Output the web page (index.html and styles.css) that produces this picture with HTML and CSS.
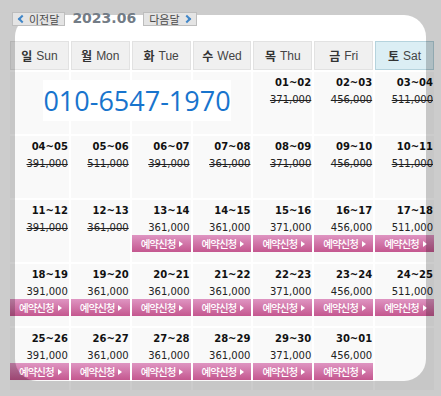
FILE: index.html
```html
<!DOCTYPE html>
<html lang="ko">
<head>
<meta charset="utf-8">
<title>2023.06</title>
<link rel="stylesheet" href="styles.css">
</head>
<body>
<div class="page">
  <div class="nav">
    <span class="navbtn"><span class="chev chev-l"></span>이전달</span>
    <span class="month">2023.06</span>
    <span class="navbtn">다음달<span class="chev chev-r"></span></span>
  </div>

  <div class="cal">
    <div class="hd"><b>일</b> Sun</div>
    <div class="hd"><b>월</b> Mon</div>
    <div class="hd"><b>화</b> Tue</div>
    <div class="hd"><b>수</b> Wed</div>
    <div class="hd"><b>목</b> Thu</div>
    <div class="hd"><b>금</b> Fri</div>
    <div class="hd sat"><b>토</b> Sat</div>

    <div class="cell e1"></div>
    <div class="cell e2"></div>
    <div class="cell e3"></div>
    <div class="cell e4"></div>
    <div class="phone">010-6547-1970</div>
    <div class="cell"><div class="dt">01~02</div><div class="pr off">371,000</div></div>
    <div class="cell"><div class="dt">02~03</div><div class="pr off">456,000</div></div>
    <div class="cell"><div class="dt">03~04</div><div class="pr off">511,000</div></div>

    <div class="cell"><div class="dt">04~05</div><div class="pr off">391,000</div></div>
    <div class="cell"><div class="dt">05~06</div><div class="pr off">511,000</div></div>
    <div class="cell"><div class="dt">06~07</div><div class="pr off">391,000</div></div>
    <div class="cell"><div class="dt">07~08</div><div class="pr off">361,000</div></div>
    <div class="cell"><div class="dt">08~09</div><div class="pr off">371,000</div></div>
    <div class="cell"><div class="dt">09~10</div><div class="pr off">456,000</div></div>
    <div class="cell"><div class="dt">10~11</div><div class="pr off">511,000</div></div>

    <div class="cell"><div class="dt">11~12</div><div class="pr off">391,000</div></div>
    <div class="cell"><div class="dt">12~13</div><div class="pr off">361,000</div></div>
    <div class="cell"><div class="dt">13~14</div><div class="pr">361,000</div><a class="btn">예약신청</a></div>
    <div class="cell"><div class="dt">14~15</div><div class="pr">361,000</div><a class="btn">예약신청</a></div>
    <div class="cell"><div class="dt">15~16</div><div class="pr">371,000</div><a class="btn">예약신청</a></div>
    <div class="cell"><div class="dt">16~17</div><div class="pr">456,000</div><a class="btn">예약신청</a></div>
    <div class="cell"><div class="dt">17~18</div><div class="pr">511,000</div><a class="btn">예약신청</a></div>

    <div class="cell"><div class="dt">18~19</div><div class="pr">391,000</div><a class="btn">예약신청</a></div>
    <div class="cell"><div class="dt">19~20</div><div class="pr">361,000</div><a class="btn">예약신청</a></div>
    <div class="cell"><div class="dt">20~21</div><div class="pr">361,000</div><a class="btn">예약신청</a></div>
    <div class="cell"><div class="dt">21~22</div><div class="pr">361,000</div><a class="btn">예약신청</a></div>
    <div class="cell"><div class="dt">22~23</div><div class="pr">371,000</div><a class="btn">예약신청</a></div>
    <div class="cell"><div class="dt">23~24</div><div class="pr">456,000</div><a class="btn">예약신청</a></div>
    <div class="cell"><div class="dt">24~25</div><div class="pr">511,000</div><a class="btn">예약신청</a></div>

    <div class="cell"><div class="dt">25~26</div><div class="pr">391,000</div><a class="btn">예약신청</a></div>
    <div class="cell"><div class="dt">26~27</div><div class="pr">361,000</div><a class="btn">예약신청</a></div>
    <div class="cell"><div class="dt">27~28</div><div class="pr">361,000</div><a class="btn">예약신청</a></div>
    <div class="cell"><div class="dt">28~29</div><div class="pr">361,000</div><a class="btn">예약신청</a></div>
    <div class="cell"><div class="dt">29~30</div><div class="pr">371,000</div><a class="btn">예약신청</a></div>
    <div class="cell"><div class="dt">30~01</div><div class="pr">456,000</div><a class="btn">예약신청</a></div>
    <div class="cell"></div>
  </div>

  <div class="frame"></div>
</div>
</body>
</html>
```

FILE: styles.css
```css
html, body {
  margin: 0;
  padding: 0;
  background: #ffffff;
}

.page {
  position: relative;
  width: 441px;
  height: 396px;
  overflow: hidden;
  font-family: "DejaVu Sans", "Noto Sans CJK KR", sans-serif;
}

/* ---------- month navigation ---------- */
.nav {
  position: relative;
  z-index: 2;
  display: flex;
  align-items: center;
  gap: 7px;
  padding: 10px 0 0 12px;
  height: 17px;
}

.navbtn {
  display: flex;
  align-items: center;
  gap: 4px;
  height: 12px;
  padding: 0 5px;
  border: 1px solid #bdbdbd;
  background: #e4e4e4;
  color: #4a4a4a;
  font: 11px/12px "Noto Sans CJK KR", sans-serif;
}

.chev {
  width: 4px;
  height: 4px;
  border-left: 2px solid #3f86c8;
  border-bottom: 2px solid #3f86c8;
}
.chev-l { transform: rotate(45deg); margin-left: 1px; }
.chev-r { transform: rotate(-135deg); margin-right: 1px; }

.month {
  font: bold 14px/17px "DejaVu Sans", sans-serif;
  color: #737c86;
}

/* ---------- calendar grid ---------- */
.cal {
  display: grid;
  grid-template-columns: repeat(7, 1fr);
  grid-template-rows: 29px repeat(5, 62px);
  gap: 2px;
  width: 424px;
  margin: 14px 0 0 10px;
}

.hd {
  display: flex;
  align-items: center;
  justify-content: center;
  gap: 4px;
  background: #f0f0f0;
  border: 1px solid #e2e2e2;
  color: #444;
  font: 12px "Liberation Sans", sans-serif;
}
.hd b {
  font: 700 12px "Noto Sans CJK KR", sans-serif;
  color: #333;
}
.hd.sat {
  background: #dbeef4;
  border-color: #b5d3dd;
}

.cell {
  background: #f9f9f9;
  text-align: right;
  padding-top: 5px;
}

/* empty days before the 1st, placed explicitly so the phone box can overlap them */
.e1 { grid-row: 2; grid-column: 1; }
.e2 { grid-row: 2; grid-column: 2; }
.e3 { grid-row: 2; grid-column: 3; }
.e4 { grid-row: 2; grid-column: 4; }

.dt {
  font: bold 10px/12px "DejaVu Sans", sans-serif;
  color: #111;
  padding-right: 1px;
}

.pr {
  margin-top: 3px;
  font: 10px/15px "DejaVu Sans", sans-serif;
  color: #222;
  padding-right: 1px;
}
.pr.off {
  text-decoration: line-through;
}

.btn {
  display: flex;
  align-items: center;
  gap: 3px;
  height: 17px;
  padding-left: 9px;
  background: linear-gradient(#df95c2, #c4578f);
  color: #fff;
  font: 500 10.5px/17px "Noto Sans CJK KR", sans-serif;
  letter-spacing: -1px;
  text-align: left;
}
.btn::after {
  content: "";
  width: 0;
  height: 0;
  margin-left: 1px;
  border-left: 4px solid #fff;
  border-top: 3.5px solid transparent;
  border-bottom: 3.5px solid transparent;
}

/* phone number sits over the four empty cells of week 1 */
.phone {
  grid-column: 1 / 5;
  grid-row: 2;
  align-self: start;
  justify-self: start;
  margin: 8px 0 0 33px;
  width: 188px;
  height: 41px;
  background: #fff;
  color: #1874cd;
  font: 27px/41px "Open Sans", sans-serif;
  text-align: center;
}

/* rounded white panel, everything outside dimmed */
.frame {
  position: absolute;
  left: 15px;
  top: 15px;
  width: 411px;
  height: 366px;
  border-radius: 22px;
  box-shadow: 0 0 0 600px rgba(0, 0, 0, 0.2);
  pointer-events: none;
  z-index: 1;
}
```
